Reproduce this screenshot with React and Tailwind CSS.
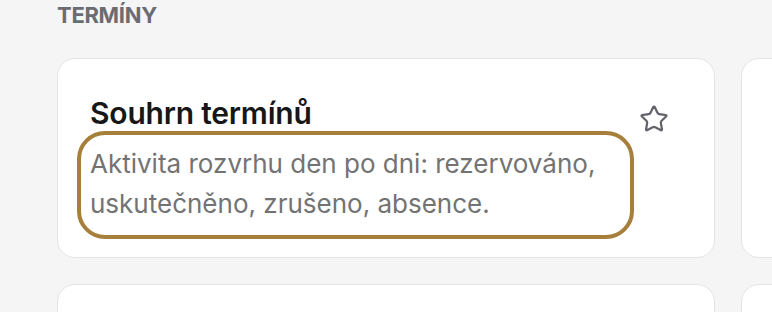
import { Star } from "lucide-react";

function Card({ title, desc, highlight }) {
  return (
    <div className="relative h-[200px] rounded-[18px] border-[1.5px] border-[#e4e4e4] bg-white pl-[32px] pr-[44px] pt-[36px]">
      <button className="absolute right-[45px] top-[45px] text-[#63636b]" title="Oblíbené">
        <Star size={30} strokeWidth={1.8} />
      </button>
      <h3 className="text-[30px] font-semibold leading-[36px] tracking-[-0.2px] text-[#171717]">{title}</h3>
      <div className="relative mt-[13px] w-[545px]">
        <p className="text-[26px] leading-[40px] text-[#737373]">{desc}</p>
        {/* highlight ring */}
        {highlight && (
          <span className="pointer-events-none absolute -left-[13px] -top-[13px] h-[108px] w-[557px] rounded-[28px] border-[4px] border-[#a67f3b]" />
        )}
      </div>
    </div>
  );
}

export default function App() {
  return (
    <div className="h-[312px] w-[772px] overflow-hidden bg-[#f5f5f5] font-['Inter',sans-serif]">
      <div className="pl-[57px]">
        <h2 className="pt-[2px] text-[22px] font-bold leading-[26px] tracking-[-0.3px] text-[#6b6b73]">TERMÍNY</h2>
        <div className="mt-[30px] grid w-[1400px] grid-cols-[658px_658px] gap-[26px]">
          <Card
            title="Souhrn termínů"
            desc="Aktivita rozvrhu den po dni: rezervováno, uskutečněno, zrušeno, absence."
            highlight
          />
          <div className="h-[200px] rounded-[18px] border-[1.5px] border-[#e4e4e4] bg-white" />
          <div className="h-[200px] rounded-[18px] border-[1.5px] border-[#e4e4e4] bg-white" />
          <div className="h-[200px] rounded-[18px] border-[1.5px] border-[#e4e4e4] bg-white" />
        </div>
      </div>
    </div>
  );
}
